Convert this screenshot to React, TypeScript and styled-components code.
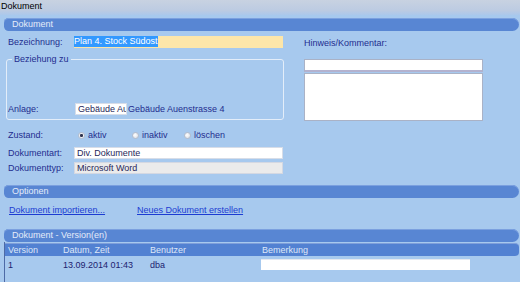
import React from 'react';
import styled, { createGlobalStyle, css } from 'styled-components';

const GlobalStyle = createGlobalStyle`
  html, body {
    margin: 0;
    padding: 0;
  }
  body {
    width: 520px;
    height: 282px;
    overflow: hidden;
    background: #a7c9ee;
    font-family: "Liberation Sans", Arial, sans-serif;
    font-size: 9px;
    color: #1f2d8e;
  }
`;

const Window = styled.div`
  width: 520px;
  height: 282px;
  display: flex;
  flex-direction: column;
  background: #a7c9ee;
  overflow: hidden;
`;

const TitleBar = styled.div`
  height: 15px;
  padding-left: 1px;
  line-height: 12px;
  color: #000;
  background: linear-gradient(#c8d2e1, #bccbe2 70%, #abc8ec);
`;

const SectionHeader = styled.div<{ $top: number }>`
  margin: ${({ $top }) => $top}px 1px 0 4px;
  height: 13px;
  line-height: 13px;
  padding-left: 8px;
  border-radius: 5px 7px 7px 5px;
  background: #5886d3;
  color: #e4ecf9;
  box-shadow: inset 0 1px 0 #7ba0df;
`;

const FormGrid = styled.div`
  display: grid;
  grid-template-columns: 280px 179px;
  column-gap: 20px;
  padding-left: 4px;
`;

const Column = styled.div`
  display: flex;
  flex-direction: column;
`;

const Row = styled.div<{ $top: number; $indent?: number }>`
  display: flex;
  align-items: center;
  height: 12px;
  margin-top: ${({ $top }) => $top}px;
  padding-left: ${({ $indent }) => $indent ?? 4}px;
`;

const Label = styled.span<{ $w?: number }>`
  width: ${({ $w }) => $w ?? 66}px;
  flex: none;
  white-space: nowrap;
`;

type BoxKind = 'yellow' | 'white' | 'gray';

const TextBox = styled.div<{ $kind: BoxKind; $w?: number }>`
  width: ${({ $w }) => $w ?? 209}px;
  height: 12px;
  line-height: 11px;
  box-sizing: border-box;
  flex: none;
  overflow: hidden;
  white-space: nowrap;
  color: #27285a;
  ${({ $kind }) =>
    $kind === 'yellow'
      ? css`
          background: #fde6a9;
        `
      : $kind === 'gray'
      ? css`
          background: #ebebeb;
          border: 1px solid #d4d8e2;
          padding-left: 2px;
        `
      : css`
          background: #fff;
          border: 1px solid #d7dde8;
          padding-left: 2px;
        `}
`;

const Selected = styled.span`
  display: inline-block;
  height: 11px;
  line-height: 11px;
  background: #3399ff;
  color: #fff;
`;

const Group = styled.fieldset`
  margin: 6px 0 0 2px;
  padding: 0 0 0 1px;
  width: 278px;
  height: 66px;
  box-sizing: border-box;
  border: 1px solid #e3edf9;
  border-radius: 3px;
`;

const GroupLegend = styled.legend`
  margin-left: 4px;
  padding: 0 2px;
  line-height: 10px;
`;

const Plain = styled.span`
  margin-left: 1px;
  white-space: nowrap;
`;

const RadioGroup = styled.div`
  display: flex;
  margin-left: 4px;
`;

const RadioItem = styled.span<{ $w: number }>`
  display: flex;
  align-items: center;
  gap: 3px;
  width: ${({ $w }) => $w}px;
`;

const RadioDot = styled.span<{ $on?: boolean }>`
  width: 7px;
  height: 7px;
  border-radius: 50%;
  box-sizing: border-box;
  border: 1px solid #b6bdcb;
  background: ${({ $on }) =>
    $on
      ? 'radial-gradient(circle, #2f3450 0 1.3px, #eef1f6 1.7px)'
      : 'radial-gradient(circle at 40% 40%, #ffffff, #d3d8e1)'};
`;

const NoteLabel = styled.div`
  margin-top: 7px;
  line-height: 11px;
`;

const NoteInput = styled.div`
  margin-top: 10px;
  height: 13px;
  box-sizing: border-box;
  background: #fff;
  border: 1px solid #aab2c6;
  border-bottom: 2px solid #b3b2cf;
`;

const NoteArea = styled.div`
  margin-top: 1px;
  height: 48px;
  box-sizing: border-box;
  background: #fff;
  border: 1px solid #aab2c6;
`;

const LinkRow = styled.div`
  display: flex;
  margin-top: 7px;
  padding-left: 9px;
  line-height: 10px;
`;

const Link = styled.a<{ $w?: number }>`
  display: inline-block;
  width: ${({ $w }) => ($w ? `${$w}px` : 'auto')};
  color: #1c3cd2;
  text-decoration: underline;
  cursor: pointer;
`;

const Table = styled.div`
  flex: 1;
  margin-left: 4px;
  border-left: 1px solid #4d6aa6;
`;

const TableRow = styled.div<{ $head?: boolean }>`
  display: grid;
  grid-template-columns: 55px 87px 112px 1fr;
  align-items: center;
  ${({ $head }) =>
    $head
      ? css`
          height: 12px;
          margin-top: 1px;
          margin-right: 1px;
          border-radius: 0 4px 4px 0;
          background: #5281d2;
          color: #dfe8f8;
          border-top: 1px solid #7f9fda;
        `
      : css`
          height: 17px;
          color: #1c2270;
        `}
`;

const Cell = styled.span`
  padding-left: 3px;
  white-space: nowrap;
`;

const RemarkBox = styled.div`
  width: 209px;
  height: 11px;
  margin-left: 2px;
  background: #fff;
  border-top: 1px solid #e4e8f0;
  box-sizing: border-box;
`;

export default function App() {
  return (
    <Window>
      <GlobalStyle />
      <TitleBar>Dokument</TitleBar>

      <SectionHeader $top={3}>Dokument</SectionHeader>
      <FormGrid>
        <Column>
          <Row $top={5}>
            <Label>Bezeichnung:</Label>
            <TextBox $kind="yellow">
              <Selected>Plan 4. Stock Südost</Selected>
            </TextBox>
          </Row>
          <Group>
            <GroupLegend>Beziehung zu</GroupLegend>
            <Row $top={39} $indent={0}>
              <Label $w={67}>Anlage:</Label>
              <TextBox $kind="white" $w={52}>
                Gebäude Aue
              </TextBox>
              <Plain>Gebäude Auenstrasse 4</Plain>
            </Row>
          </Group>
          <Row $top={9}>
            <Label>Zustand:</Label>
            <RadioGroup>
              <RadioItem $w={54}>
                <RadioDot $on />
                aktiv
              </RadioItem>
              <RadioItem $w={52}>
                <RadioDot />
                inaktiv
              </RadioItem>
              <RadioItem $w={60}>
                <RadioDot />
                löschen
              </RadioItem>
            </RadioGroup>
          </Row>
          <Row $top={6}>
            <Label>Dokumentart:</Label>
            <TextBox $kind="white">Div. Dokumente</TextBox>
          </Row>
          <Row $top={3}>
            <Label>Dokumenttyp:</Label>
            <TextBox $kind="gray">Microsoft Word</TextBox>
          </Row>
        </Column>
        <Column>
          <NoteLabel>Hinweis/Kommentar:</NoteLabel>
          <NoteInput />
          <NoteArea />
        </Column>
      </FormGrid>

      <SectionHeader $top={11}>Optionen</SectionHeader>
      <LinkRow>
        <Link $w={128}>Dokument importieren...</Link>
        <Link>Neues Dokument erstellen</Link>
      </LinkRow>

      <SectionHeader $top={14}>Dokument - Version(en)</SectionHeader>
      <Table>
        <TableRow $head>
          <Cell>Version</Cell>
          <Cell>Datum, Zeit</Cell>
          <Cell>Benutzer</Cell>
          <Cell>Bemerkung</Cell>
        </TableRow>
        <TableRow>
          <Cell>1</Cell>
          <Cell>13.09.2014 01:43</Cell>
          <Cell>dba</Cell>
          <RemarkBox />
        </TableRow>
      </Table>
    </Window>
  );
}
